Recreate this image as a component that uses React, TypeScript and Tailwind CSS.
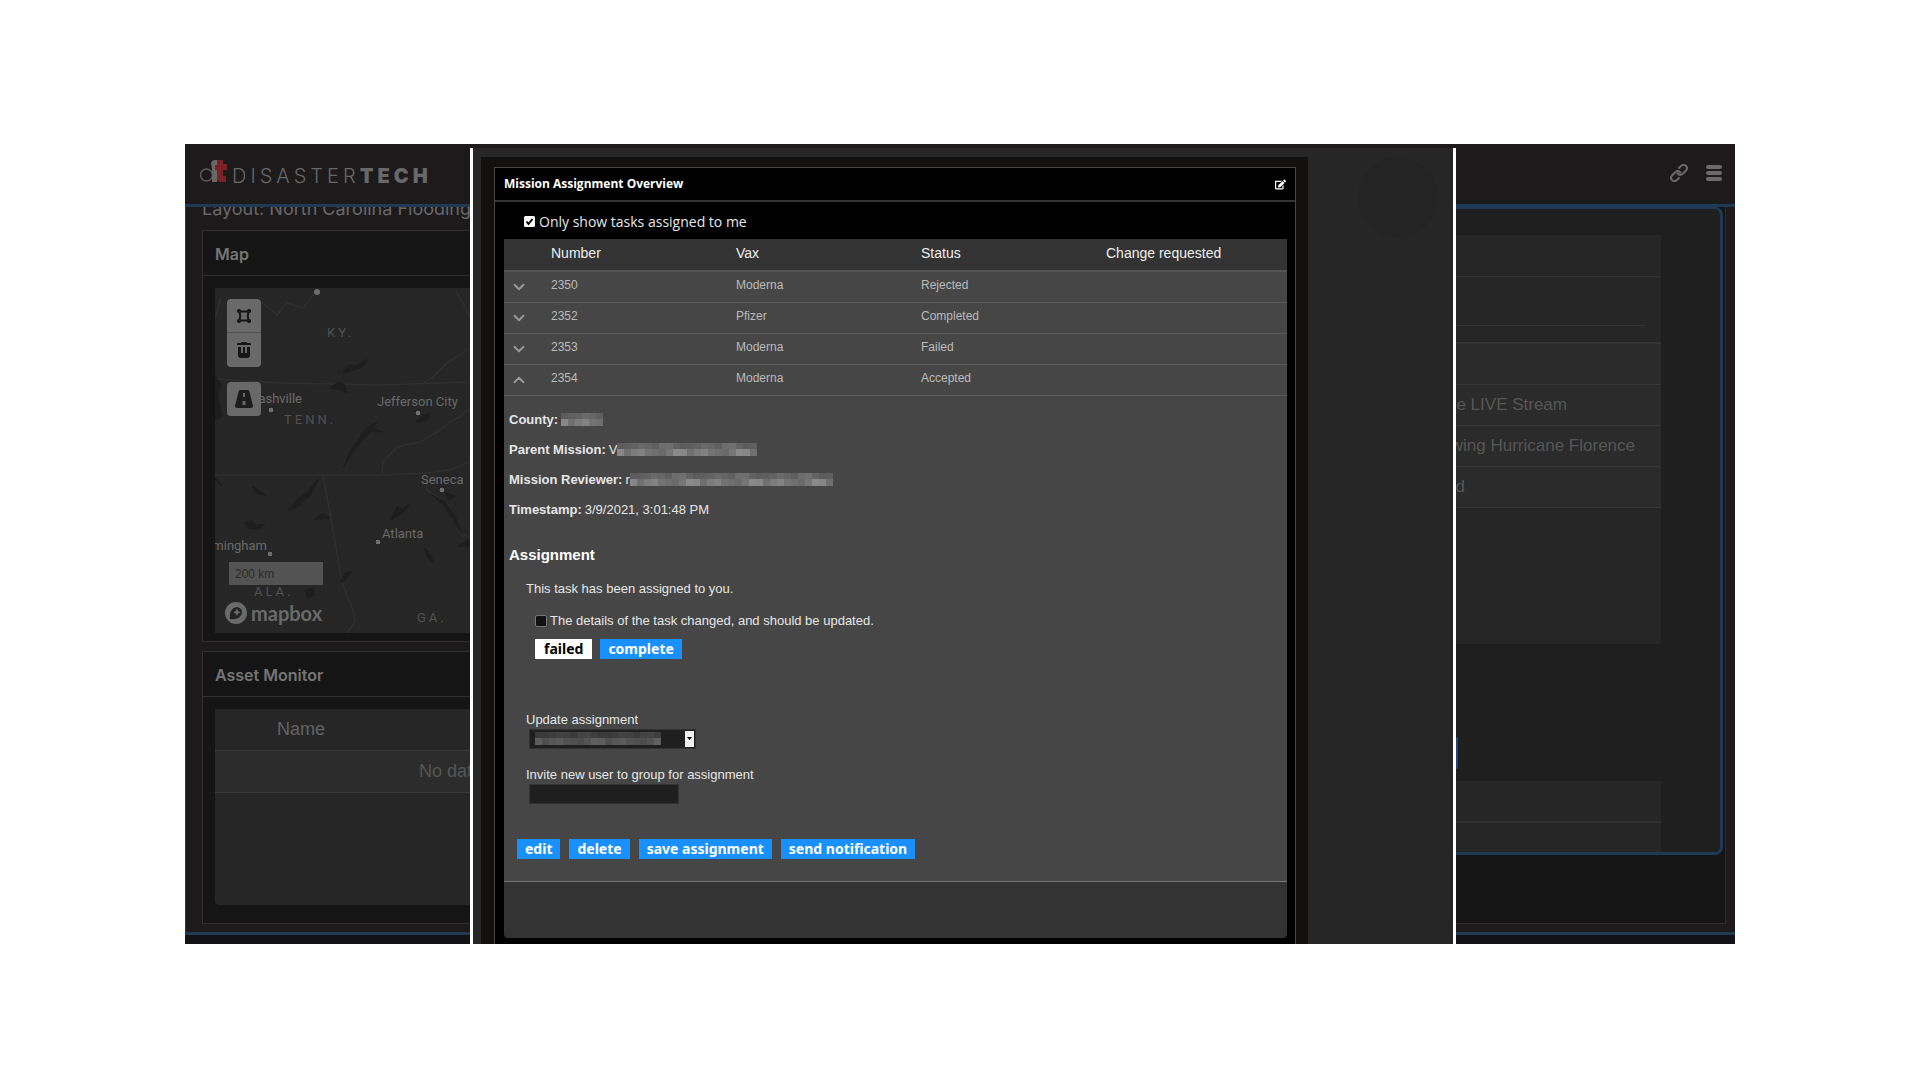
import { ChevronDown, ChevronUp } from "lucide-react";
import { FaEdit } from "react-icons/fa";

const tasks = [
    { number: "2350", vax: "Moderna", status: "Rejected", open: false },
    { number: "2352", vax: "Pfizer", status: "Completed", open: false },
    { number: "2353", vax: "Moderna", status: "Failed", open: false },
    { number: "2354", vax: "Moderna", status: "Accepted", open: true },
];

const cities = [
    { name: "Nashville", x: 87, y: 115, anchor: "end", dot: [56, 122] },
    { name: "Jefferson City", x: 162, y: 118, anchor: "start", dot: [203, 125] },
    { name: "Seneca", x: 206, y: 196, anchor: "start", dot: [227, 202] },
    { name: "Atlanta", x: 167, y: 250, anchor: "start", dot: [163, 254] },
    { name: "Birmingham", x: 52, y: 262, anchor: "end", dot: [55, 266] },
] as const;

const states = [
    { name: "KY.", x: 112, y: 49 },
    { name: "TENN.", x: 69, y: 136 },
    { name: "ALA.", x: 39, y: 308 },
    { name: "GA.", x: 202, y: 334 },
];

const feeds = [
    { title: "ce LIVE Stream", pad: "pr-[94px]" },
    { title: "wing Hurricane Florence", pad: "pr-[26px]" },
    { title: "d", pad: "pr-[196px]" },
];

const tones = ["#6a6a6a", "#747474", "#7c7c7c", "#878787", "#767676", "#6f6f6f", "#828282", "#707070", "#8a8a8a"];

// pixelated strip that hides private values
function Redacted({ cells, dim = false }: { cells: number; dim?: boolean }) {
    const list = Array.from({ length: cells });
    return (
        <svg className={dim ? "opacity-60" : ""} width={cells * 7} height="13" aria-hidden="true">
            {list.map((_, i) => (
                <g key={i}>
                    <rect x={i * 7} y="0" width="7" height="6" fill={tones[(i * 5) % 9]} opacity="0.6" />
                    <rect x={i * 7} y="6" width="7" height="7" fill={tones[(i * 4 + 3) % 9]} />
                </g>
            ))}
        </svg>
    );
}

function BlueButton({ children }: { children: string }) {
    return <button className="h-5 bg-[#1890ff] px-2 font-['Noto_Sans'] text-sm leading-5 font-bold text-white">{children}</button>;
}

function Logo() {
    return (
        <div className="flex items-start text-[#686868]">
            <svg width="28" height="23" viewBox="0 0 28 23" aria-hidden="true">
                <circle cx="6.500" cy="15" r="6" fill="none" stroke="#5c5c5c" strokeWidth="1.4" />
                <path d="M11 3Q12 0 15 0H17V22H12V9Z" fill="#686868" />
                <path d="M17 0H23V4H27V10H23V16H26V22H20Q17 22 17 18V10H15V5H17Z" fill="#7a2228" />
            </svg>
            <span className="pt-1 pl-1 font-['Inter'] text-xl leading-6 font-light tracking-[4px]">
                DISASTER<b className="font-black">TECH</b>
            </span>
        </div>
    );
}

function MapView() {
    return (
        <div className="relative h-[345px] overflow-hidden bg-[#262626]">
            <svg className="block" width="255" height="345" aria-label="Map">
                <g fill="none" stroke="#2f2f2f" strokeWidth="1.5">
                    <path d="M0 30L6 10M20 30L48 15L56 22L62 27L72 15L88 20L95 12L99 5" />
                    <path d="M0 91L65 95L165 97L255 94M205 97L218 89L232 75L255 60M241 2L246 12L252 22L255 30" />
                    <path d="M0 187H167L212 185L235 182L255 174M167 187L168 174L182 159L205 154L222 144L238 132L245 129L250 124L255 121" />
                    <path d="M108 187L115 225L127 294L138 322L140 334L132 345M212 187L212 202L233 217L245 245L255 250" />
                </g>
                <g fill="#1e1e1e" stroke="#1e1e1e" strokeWidth="2" strokeLinejoin="round">
                    <path d="M128 85L134 77L142 78L152 72L146 79L138 82ZM116 100L124 94L130 98L131 104L124 101Z" />
                    <path d="M128 180L136 162L146 148L154 138L162 134L158 140L168 144L156 143L146 154L138 164Z" strokeWidth="1" />
                    <path d="M74 222L82 212L92 205L103 192L94 208L84 217Z" />
                    <path d="M38 199L50 207L42 205ZM30 235L36 233L40 237L49 237L42 241L34 240ZM100 231L108 226L114 230Z" />
                    <path d="M202 134L208 128L215 126L211 132ZM177 231L182 219L187 222L194 217L186 226Z" />
                    <path d="M216 206L230 214L240 228L247 246L238 232L228 217ZM230 204L240 208L233 213Z" strokeWidth="1" />
                    <path d="M210 261L213 270L218 274L214 266ZM126 294L130 286L136 284L131 291ZM90 303L98 300L99 307L93 309ZM244 258L255 252L254 258Z" />
                    <path d="M0 88L5 98L2 108L7 128L0 132ZM0 190L7 198" />
                </g>
                <circle cx="102" cy="4" r="3" fill="#6e6e6e" />
                {states.map((s) => (
                    <text key={s.name} x={s.x} y={s.y} className="fill-[#515151] font-['Roboto'] text-[13px] tracking-[3px]">
                        {s.name}
                    </text>
                ))}
                {cities.map((c) => (
                    <g key={c.name}>
                        <text x={c.x} y={c.y} textAnchor={c.anchor} className="fill-[#6a6a6a] font-['Roboto'] text-[13px]">
                            {c.name}
                        </text>
                        <circle cx={c.dot[0]} cy={c.dot[1]} r="3" fill="#6e6e6e" stroke="#1c1c1c" />
                    </g>
                ))}
            </svg>
            <div className="absolute top-[11px] left-3 flex flex-col gap-[15px]">
                <div className="divide-y divide-[#505050] rounded bg-[#696969]">
                    <button aria-label="Draw area" className="grid size-[34px] place-items-center">
                        <svg width="14" height="14" viewBox="0 0 14 14" fill="none" stroke="#151515" strokeWidth="2">
                            <path d="M3 2.5H11M3 11.5H11M2.5 3Q4 7 2.5 11M11.5 3Q10 7 11.5 11" />
                            <path d="M2 2H2.1M12 2H12.1M2 12H2.1M12 12H12.1" strokeWidth="4" strokeLinecap="round" />
                        </svg>
                    </button>
                    <button aria-label="Delete area" className="grid size-[34px] place-items-center">
                        <svg width="14" height="16" viewBox="0 0 14 16" fill="#151515">
                            <path d="M4 1Q4 0 5 0H9Q10 0 10 1H13Q14 1 14 2V3H0V2Q0 1 1 1ZM1 5H4V11H6V5H8V11H10V5H13V13Q13 16 10 16H4Q1 16 1 13Z" />
                        </svg>
                    </button>
                </div>
                <button aria-label="Roads" className="grid size-[34px] place-items-center rounded bg-[#696969]">
                    <svg width="18" height="18" viewBox="0 0 18 18" fill="#1c1c1c" fillRule="evenodd">
                        <path d="M5 0H13Q14 0 14.5 2L18 16Q18 18 16 18H2Q0 18 0 16L3.500 2Q4 0 5 0ZM8 3V7H10V3ZM7.500 11V15H10.500V11Z" />
                    </svg>
                </button>
            </div>
            <div className="absolute bottom-2 left-2.5 font-['Lato']">
                <div className="ml-1 h-[23px] w-[94px] bg-[#535353] px-1.5 font-['Liberation_Sans'] text-xs leading-6 text-[#2b2b2b]">200 km</div>
                <div className="flex items-center gap-1 pt-4 text-xl leading-6 font-bold text-[#6a6a6a]">
                    <svg width="22" height="22" viewBox="0 0 22 22">
                        <circle cx="11" cy="11" r="11" fill="#6a6a6a" />
                        <path d="M5 17Q4 10 8 6.500Q12 3.500 15.500 6.500Q18.500 10 15.500 14Q12 18 5 17Z" fill="#222" />
                        <path d="M12 6.500L13.200 9L15.700 10.200L13.200 11.400L12 14L10.800 11.400L8.300 10.200L10.800 9Z" fill="#6a6a6a" />
                    </svg>
                    mapbox
                </div>
            </div>
        </div>
    );
}

function LeftSide() {
    return (
        <div className="flex w-[285px] shrink-0 flex-col overflow-hidden bg-[#1c1a1b]">
            <header className="relative z-10 h-[63px] border-b-[3px] border-[#1f3a57] bg-[#1c1a1b] pt-4 pl-[15px]">
                <Logo />
            </header>
            <main className="flex flex-1 flex-col border-b-[3px] border-l border-[#1f3a57] pb-2 pl-4 font-['Inter']">
                <h2 className="-mt-2.5 h-[33px] text-lg leading-6 whitespace-nowrap text-[#686868]">Layout: North Carolina Flooding</h2>
                <section className="mb-[9px] border border-r-0 border-[#303030] bg-[#151515]">
                    <h3 className="h-[45px] border-b border-[#303030] pl-3 text-base leading-[46px] font-semibold text-[#757575]">Map</h3>
                    <div className="pt-3 pb-2 pl-3">
                        <MapView />
                    </div>
                </section>
                <section className="flex flex-1 flex-col border border-r-0 border-[#303030] bg-[#151515]">
                    <h3 className="h-[45px] border-b border-[#303030] pl-3 text-base leading-[46px] font-semibold text-[#757575]">Asset Monitor</h3>
                    <div className="mt-3 mb-[18px] ml-3 flex-1 rounded-bl bg-[#262626] font-['Liberation_Sans'] text-lg leading-10 whitespace-nowrap text-[#636363]">
                        <table className="w-full">
                            <thead>
                                <tr className="h-[41px] border-b border-[#3a3a3a]">
                                    <th className="pl-[62px] text-left font-normal">Name</th>
                                </tr>
                            </thead>
                            <tbody>
                                <tr className="h-[42px] border-b border-[#3a3a3a] bg-[#2c2c2c] text-[#555]">
                                    <td className="max-w-0 overflow-hidden pl-[204px]">No data</td>
                                </tr>
                            </tbody>
                        </table>
                    </div>
                </section>
            </main>
            <div className="h-[9px] bg-[#131315]"></div>
        </div>
    );
}

function RightSide() {
    return (
        <div className="flex w-[279px] shrink-0 flex-col bg-[#1c1a1b]">
            <header className="flex h-[63px] items-start justify-end gap-[18px] border-b-[3px] border-[#1f3a57] pt-5 pr-[13px] text-[#6a6a6a]">
                <button aria-label="Copy link">
                    <svg width="18" height="18" viewBox="0 0 18 18" fill="none" stroke="currentColor" strokeWidth="2" strokeLinecap="round">
                        <path d="M9 4L11 2Q14 -0.500 16 2Q18 4 16 6.500L12.500 10Q10 12 7.500 9.500" />
                        <path d="M9 14L7 16Q4 18.500 2 16Q0 14 2 11.500L5.500 8Q8 6 10.500 8.500" />
                    </svg>
                </button>
                <button aria-label="Menu" className="flex flex-col gap-0.5 pt-px">
                    <span className="h-1 w-4 rounded-full bg-[#6a6a6a]"></span>
                    <span className="h-1 w-4 rounded-full bg-[#6a6a6a]"></span>
                    <span className="h-1 w-4 rounded-full bg-[#6a6a6a]"></span>
                </button>
            </header>
            <div className="flex flex-1 flex-col border-b-[3px] border-[#1f3a57] pr-[9px] pb-2">
                <div className="flex-1 border-r border-b border-[#2c2c2c] bg-[#151515] pr-0.5">
                    <div className="rounded-r-lg border-t-2 border-r-[3px] border-b-[3px] border-[#1f3a57] bg-[#1f1f1f] pt-[26px] pr-[59px]">
                        <div className="overflow-hidden rounded-br bg-[#262626] pb-[136px]">
                            <div className="h-[42px] border-b border-[#333]"></div>
                            <div className="h-[67px] border-b-2 border-[#333] pr-[15px]">
                                <div className="h-[49px] border-b border-[#333]"></div>
                            </div>
                            <div className="h-[41px] border-b border-[#363636] bg-[#2b2b2b]"></div>
                            {feeds.map((f) => (
                                <div key={f.title} className={`flex h-[41px] items-center justify-end border-b border-[#363636] bg-[#2b2b2b] font-['Liberation_Sans'] text-[17px] whitespace-nowrap text-[#565656] ${f.pad}`}>
                                    {f.title}
                                </div>
                            ))}
                        </div>
                        <button aria-label="Add feed" className="mt-[93px] mb-3 block h-8 w-0.5 rounded-r bg-[#1f4670]"></button>
                        <div className="h-[71px] bg-[#262626]">
                            <div className="h-[42px] border-b-2 border-[#303030]"></div>
                        </div>
                    </div>
                </div>
            </div>
            <div className="h-[9px] bg-[#131315]"></div>
        </div>
    );
}

function MissionPanel() {
    return (
        <div className="flex flex-1 flex-col border border-b-0 border-[#484848] bg-black font-['Open_Sans'] text-white">
            <div className="flex h-[34px] items-center justify-between border-b-2 border-[#333] px-[9px]">
                <h1 className="text-xs font-bold">Mission Assignment Overview</h1>
                <button aria-label="Edit panel">
                    <FaEdit className="size-[11px]" />
                </button>
            </div>
            <label className="flex h-[37px] items-center gap-1 pt-0.5 pl-[29px] text-sm text-[#e8e8e8]">
                <input type="checkbox" defaultChecked className="peer sr-only" />
                <svg width="11" height="11" viewBox="0 0 11 11">
                    <rect width="11" height="11" rx="1.500" fill="#fff" />
                    <path d="M2.500 5.500L4.500 8L8.500 3" fill="none" stroke="#000" strokeWidth="2" />
                </svg>
                Only show tasks assigned to me
            </label>
            <div className="mr-2 mb-1.5 ml-[9px] flex flex-1 flex-col rounded-b bg-[#333] font-['Liberation_Sans']">
                <table className="w-full table-fixed text-left">
                    <thead>
                        <tr className="h-8 border-b-2 border-[#555] text-sm text-[#eee]">
                            <th className="w-[47px]" aria-label="Toggle"></th>
                            <th className="w-[185px] pb-1 font-normal">Number</th>
                            <th className="w-[185px] pb-1 font-normal">Vax</th>
                            <th className="w-[185px] pb-1 font-normal">Status</th>
                            <th className="pb-1 font-normal">Change requested</th>
                        </tr>
                    </thead>
                    <tbody className="bg-[#464646] text-xs text-[#bbb]">
                        {tasks.map((t) => (
                            <tr key={t.number} className="h-[31px] border-b border-[#5c5c5c]">
                                <td className="pl-1.5">
                                    <button aria-label="Toggle row" className="block text-[#999]">
                                        {t.open ? <ChevronUp className="size-[18px]" strokeWidth={2.5} /> : <ChevronDown className="size-[18px]" strokeWidth={2.5} />}
                                    </button>
                                </td>
                                <td className="pb-1">{t.number}</td>
                                <td className="pb-1">{t.vax}</td>
                                <td className="pb-1">{t.status}</td>
                                <td></td>
                            </tr>
                        ))}
                    </tbody>
                </table>
                <div className="flex-1 border-b border-[#777] bg-[#464646] pt-[9px] pl-[5px] text-[13px] leading-[30px] text-[#e6e6e6]">
                    <p className="flex items-center gap-[3px]"><b>County:</b> <Redacted cells={6} /></p>
                    <p className="flex items-center gap-[3px]"><b>Parent Mission:</b> <span className="flex items-center">V<Redacted cells={20} /></span></p>
                    <p className="flex items-center gap-[3px]"><b>Mission Reviewer:</b> <span className="flex items-center">r<Redacted cells={29} /></span></p>
                    <p className="flex items-center gap-[3px]"><b>Timestamp:</b> 3/9/2021, 3:01:48 PM</p>
                    <h2 className="pt-[15px] text-[15px] font-bold text-white">Assignment</h2>
                    <div className="pl-[17px]">
                        <p className="pt-1">This task has been assigned to you.</p>
                        <label className="flex items-center gap-[3px] pt-0.5 pl-[9px]">
                            <input type="checkbox" className="size-3 appearance-none rounded-xs border border-[#777] bg-[#111]" />
                            The details of the task changed, and should be updated.
                        </label>
                        <div className="flex gap-2 pt-[3px] pl-[9px]">
                            <button className="h-5 bg-white px-[9px] font-['Noto_Sans'] text-sm leading-5 font-bold text-black">failed</button>
                            <BlueButton>complete</BlueButton>
                        </div>
                        <label htmlFor="assignee" className="block pt-[52px] leading-[18px]">Update assignment</label>
                        <div className="relative ml-[3px] h-5 w-[167px]">
                            <select id="assignee" className="block h-5 w-full appearance-none border border-[#333] bg-[#1f1f1f]"></select>
                            <div className="pointer-events-none absolute inset-0 flex items-center justify-between pr-0.5 pl-1.5">
                                <Redacted cells={18} dim />
                                <span className="grid h-4 w-[9px] place-items-center bg-[#f0f0f0]">
                                    <svg width="5" height="3"><path d="M0 0H5L2.500 3Z" fill="#000" /></svg>
                                </span>
                            </div>
                        </div>
                        <label htmlFor="invite" className="block pt-[17px] leading-[18px]">Invite new user to group for assignment</label>
                        <input id="invite" className="ml-[3px] block h-5 w-[150px] border border-[#333] bg-[#1f1f1f] px-1 text-[13px]" />
                    </div>
                    <div className="flex gap-[9px] pt-[35px] pl-2">
                        <BlueButton>edit</BlueButton>
                        <BlueButton>delete</BlueButton>
                        <BlueButton>save assignment</BlueButton>
                        <BlueButton>send notification</BlueButton>
                    </div>
                </div>
                <div className="h-14"></div>
            </div>
        </div>
    );
}

export default function App() {
    return (
        <div className="min-h-screen bg-white px-[185px] py-36">
            <div className="flex min-h-[800px] bg-[#1c1a1b]">
                <LeftSide />
                <div className="mt-1 flex flex-1 border-x-[3px] border-white bg-[#262626] pt-[9px] pl-2">
                    <div className="flex flex-1 bg-[#12110f] pt-[10px] pr-3 pl-[13px]">
                        <MissionPanel />
                    </div>
                    <div className="w-[145px] pl-[50px]">
                        <div className="size-20 rounded-full bg-[#242424]"></div>
                    </div>
                </div>
                <RightSide />
            </div>
        </div>
    );
}
